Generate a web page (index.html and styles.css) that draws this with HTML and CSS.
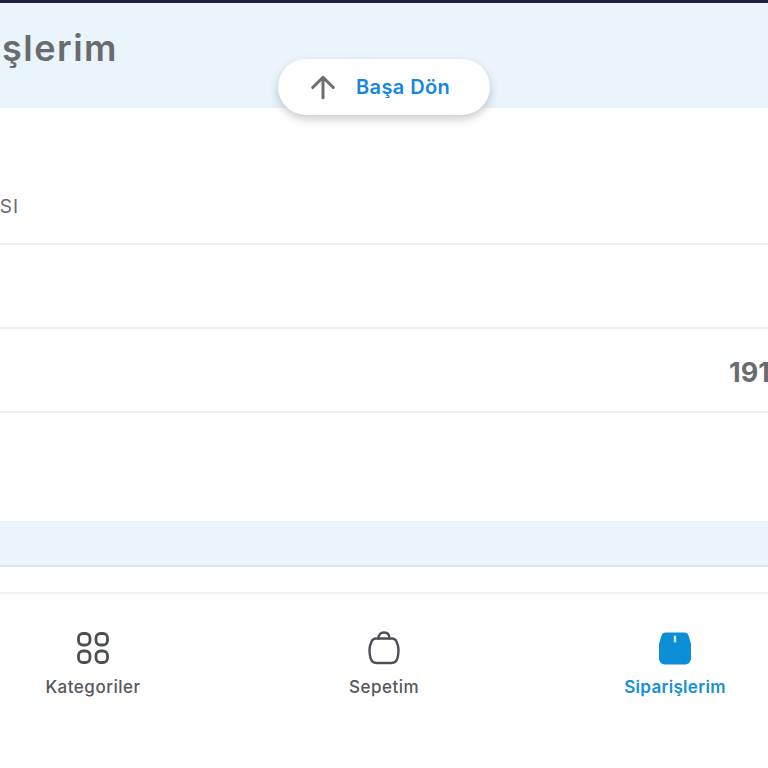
FILE: index.html
```html
<!DOCTYPE html>
<html lang="tr">
<head>
<meta charset="utf-8">
<title>Siparişlerim</title>
<link rel="stylesheet" href="styles.css">
</head>
<body>
<div class="topbar"></div>
<header class="header"><h1 class="title">Siparişlerim</h1></header>
<button class="back-top">
  <svg class="back-icon" viewBox="0 0 24 24" fill="none" stroke="#6d6e71" stroke-width="2.800" stroke-linecap="round" stroke-linejoin="round"><path d="M12 22V3M2.500 12.500 12 3l9.500 9.500"/></svg>
  <span>Başa Dön</span>
</button>
<main class="content">
  <div class="row row-first"><span class="order-label">SİPARİŞ NUMARASI</span></div>
  <div class="row"></div>
  <div class="row row-price"><span class="price">191,90</span></div>
  <div class="spacer"></div>
  <div class="band"></div>
  <div class="gap"></div>
</main>
<nav class="nav">
  <a class="nav-item">
    <svg class="nav-icon" viewBox="0 0 34 34" fill="none" stroke="#4c4f55" stroke-width="2.800"><rect x="2.500" y="2.500" width="11.500" height="11.500" rx="4.500"/><rect x="20" y="2.500" width="11.500" height="11.500" rx="4.500"/><rect x="2.500" y="20" width="11.500" height="11.500" rx="4.500"/><rect x="20" y="20" width="11.500" height="11.500" rx="4.500"/></svg>
    <span>Kategoriler</span>
  </a>
  <a class="nav-item">
    <svg class="nav-icon" viewBox="0 0 34 34" fill="none" stroke="#4c4f55" stroke-width="2.400" stroke-linejoin="round" stroke-linecap="round"><path d="M9 7.500h16c2.500 0 3.500 1 4.500 3 1.300 3 2 5.500 2 8.500 0 3-.3 5.500-1 8-.8 3-3 5-6 5H9.500c-3 0-5.200-2-6-5-.7-2.500-1-5-1-8 0-3 .7-5.500 2-8.500 1-2 2-3 4.500-3z"/><path d="M11.500 7.500c0-4 2-6 5.500-6s5.500 2 5.500 6"/></svg>
    <span>Sepetim</span>
  </a>
  <a class="nav-item nav-active">
    <svg class="nav-icon" viewBox="0 0 34 34"><path fill="#0d8fd8" d="M8 1.500h18c2.500 0 4 1 4.700 3.500L33 13v14c0 4-2.500 6.500-6.500 6.500h-19C3.500 33.500 1 31 1 27V13l2.300-8C4 2.500 5.500 1.500 8 1.500z"/><rect x="15.800" y="4.500" width="2.400" height="7" rx="1.200" fill="#d8eefa"/></svg>
    <span>Siparişlerim</span>
  </a>
</nav>
</body>
</html>
```
FILE: styles.css
```css
* { box-sizing: border-box; }
html, body {
  margin: 0;
  width: 768px;
  height: 768px;
  overflow: hidden;
  background: #fff;
  font-family: "Inter", "Noto Sans", sans-serif;
  position: relative;
}
.topbar { height: 3px; background: #1d2340; }
.header {
  height: 105px;
  background: #e9f4fb;
  display: flex;
  align-items: flex-start;
}
.title {
  margin: 22px 0 0;
  width: 118px;
  display: flex;
  justify-content: flex-end;
  white-space: nowrap;
  font-size: 36px;
  line-height: 46px;
  letter-spacing: 1.500px;
  font-weight: 600;
  color: #6a6b6e;
}
.back-top {
  position: absolute;
  left: 278px;
  top: 59px;
  width: 212px;
  height: 56px;
  border: 0;
  border-radius: 28px;
  background: #fff;
  box-shadow: 0 4px 9px rgba(70, 70, 70, .28);
  display: flex;
  align-items: center;
  gap: 20px;
  padding: 0 0 0 32px;
  font-family: inherit;
  font-size: 20px;
  letter-spacing: .4px;
  font-weight: 600;
  color: #1487e2;
}
.back-icon { width: 26px; height: 26px; flex: none; }
.row {
  height: 84px;
  border-bottom: 2px solid #eff1f2;
  display: flex;
  align-items: center;
}
.row-first { height: 137px; align-items: flex-end; padding-bottom: 24px; }
.order-label {
  width: 19px;
  display: flex;
  justify-content: flex-end;
  white-space: nowrap;
  font-size: 19px;
  line-height: 24px;
  letter-spacing: 1px;
  color: #6a6b6e;
}
.row-price { padding-left: 729px; padding-top: 4px; }
.price {
  white-space: nowrap;
  font-size: 27px;
  font-weight: 700;
  color: #6a6b6e;
}
.spacer { height: 108px; }
.band {
  height: 46px;
  background: #e9f4fb;
  border-bottom: 2px solid #d9e6ee;
}
.gap { height: 25px; }
.nav {
  border-top: 2px solid #eff1f2;
  height: 177px;
  display: grid;
  grid-template-columns: repeat(3, 291px);
  justify-content: center;
  padding-top: 37px;
  align-items: start;
}
.nav-item {
  display: flex;
  flex-direction: column;
  align-items: center;
  gap: 11px;
  font-size: 17px;
  line-height: 22px;
  letter-spacing: .5px;
  font-weight: 500;
  color: #55585c;
}
.nav-icon { width: 34px; height: 34px; }
.nav-active { color: #1590d9; font-weight: 600; letter-spacing: .3px; }
```
